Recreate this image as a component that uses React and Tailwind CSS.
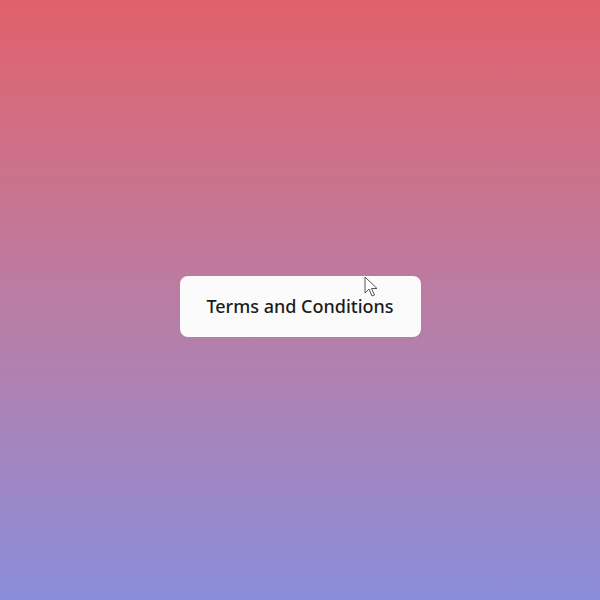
export default function App() {
  return (
    <div className="w-full h-[600px] flex items-center justify-center pt-[13px] bg-gradient-to-b from-[#e1606a] to-[#8a8dd9]">
      <div className="relative">
        <button className="w-[241px] h-[61px] rounded-lg bg-[#fbfbfb] text-[#1c1c1c] text-[18px] font-medium font-['Noto_Sans',sans-serif] flex items-center justify-center">
          Terms and Conditions
        </button>
        {/* mouse cursor */}
        <svg
          className="absolute left-[184px] top-[0px] w-[14px] h-[22px]"
          viewBox="0 0 14 22"
        >
          <path
            d="M1 1 L1 17 L5 13 L8 20 L10.5 19 L7.5 12.5 L13 12.5 Z"
            fill="white"
            stroke="#555"
            strokeWidth="1"
            strokeLinejoin="round"
          />
        </svg>
      </div>
    </div>
  );
}
